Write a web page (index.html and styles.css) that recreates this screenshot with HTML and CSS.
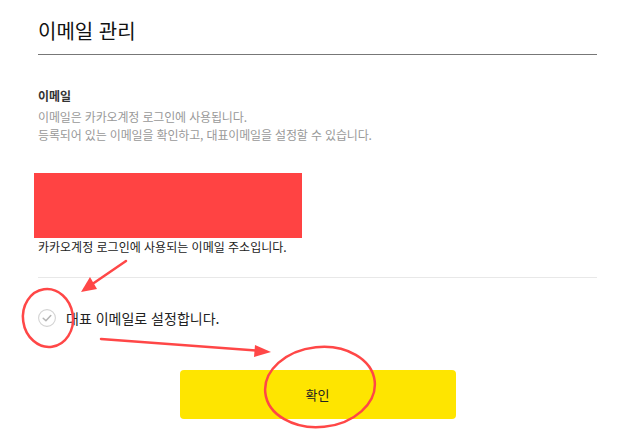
FILE: index.html
```html
<!DOCTYPE html>
<html lang="ko">

<head>
    <meta charset="UTF-8">
    <meta name="viewport" content="width=device-width, initial-scale=1.0">
    <title>이메일 관리</title>
    <link rel="stylesheet" href="styles.css">
</head>

<body>
    <div id="app">
        <div class="page">
            <h1 class="page-title">이메일 관리</h1>

            <div class="email-info">
                <strong class="info-label">이메일</strong>
                <p class="info-desc">이메일은 카카오계정 로그인에 사용됩니다.<br>등록되어 있는 이메일을 확인하고, 대표이메일을 설정할 수 있습니다.</p>
            </div>

            <div class="email-box"></div>
            <p class="email-note">카카오계정 로그인에 사용되는 이메일 주소입니다.</p>

            <div class="divider"></div>

            <label class="check-row">
                <span class="check-ico">
                    <svg width="18" height="18" viewBox="0 0 18 18">
                        <circle cx="9" cy="9" r="8.4" fill="#fff" stroke="#d3d3d3" stroke-width="1.1"/>
                        <path d="M5.2 9.2 L7.9 11.8 L12.8 6.5" fill="none" stroke="#b5b5b5" stroke-width="1.5" stroke-linecap="round" stroke-linejoin="round"/>
                    </svg>
                </span>
                <span class="check-text">대표 이메일로 설정합니다.</span>
            </label>

            <div class="btn-wrap">
                <button class="btn-confirm" type="button">확인</button>
            </div>
        </div>

        <!-- 빨간 표시 -->
        <svg class="marks" width="628" height="430" viewBox="0 0 628 430">
            <g fill="none" stroke="#ff4747" stroke-width="2.5" stroke-linecap="round">
                <line x1="126" y1="261" x2="88" y2="287"/>
                <ellipse cx="48" cy="318" rx="25" ry="29" transform="rotate(-8 48 318)"/>
                <line x1="101" y1="339" x2="262" y2="351"/>
                <ellipse cx="320" cy="387" rx="55" ry="40" transform="rotate(-6 320 387)"/>
            </g>
            <g fill="#ff4747">
                <polygon points="81,292 90,277 97,289"/>
                <polygon points="271,352 255,345 254,357"/>
            </g>
        </svg>
    </div>
</body>

</html>
```

FILE: styles.css
```css
/* reset start */
* {
    padding: 0;
    margin: 0;
    box-sizing: border-box;
}

html,
body,
#app {
    width: 100%;
    height: 100%;
    overflow: hidden;
}

body {
    background: #fff;
    font-family: "Noto Sans CJK KR", "Noto Sans", sans-serif;
    color: #222;
}

button {
    outline: none !important;
    border: none;
    font-family: inherit;
}

/* reset end */


/* structure start */
#app {
    position: relative;
}

.page {
    width: 559px;
    margin-left: 38px;
}

.page-title {
    padding-top: 16px;
    padding-bottom: 8px;
    font-size: 20px;
    line-height: 30px;
    font-weight: 400;
    color: #111;
    border-bottom: 1px solid #777;
}

.email-info {
    margin-top: 32px;
}

.info-label {
    display: block;
    font-size: 12px;
    line-height: 18px;
    font-weight: 700;
    color: #333;
}

.info-desc {
    margin-top: 3px;
    font-size: 12px;
    line-height: 18px;
    letter-spacing: -0.15px;
    color: #999;
}

.email-box {
    width: 268px;
    height: 65px;
    margin-top: 29px;
    margin-left: -4px;
    background-color: #ff4343;
}

.email-note {
    font-size: 12px;
    line-height: 18px;
    color: #222;
}

.divider {
    height: 1px;
    margin-top: 21px;
    background-color: #e8e8e8;
}

.check-row {
    display: flex;
    align-items: center;
    gap: 10px;
    height: 18px;
    margin-top: 31px;
}

.check-ico {
    display: flex;
}

.check-text {
    font-size: 14px;
    line-height: 18px;
    color: #222;
}

.btn-wrap {
    display: flex;
    justify-content: center;
    margin-top: 43px;
}

.btn-confirm {
    width: 276px;
    height: 49px;
    border-radius: 4px;
    background-color: #fee500;
    font-size: 13px;
    color: #222;
}

.marks {
    position: absolute;
    top: 0;
    left: 0;
    pointer-events: none;
}

/* structure end */
```
